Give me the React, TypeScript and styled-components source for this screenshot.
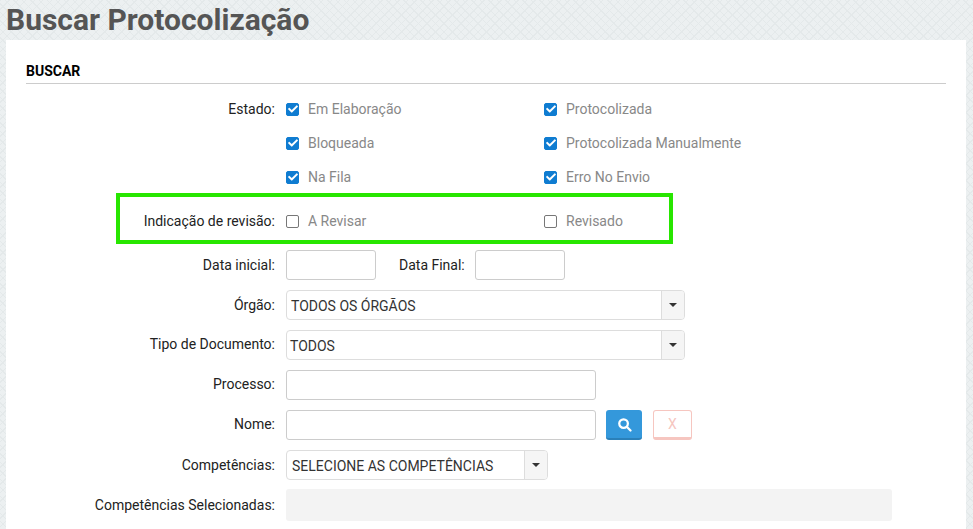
import React from "react";
import styled, { createGlobalStyle } from "styled-components";
import { FaCheck } from "react-icons/fa";

const GlobalStyle = createGlobalStyle`
    html, body {
        margin: 0;
        padding: 0;
        height: 100%;
        overflow: hidden;
    }

    body {
        font-family: Roboto, "Liberation Sans", sans-serif;
        font-size: 14px;
        color: #222;
        background-color: #ecf0f1;
        background-image:
            repeating-linear-gradient(45deg, transparent 0 5px, #e4e9ea 5px 6px),
            repeating-linear-gradient(-45deg, transparent 0 5px, #e4e9ea 5px 6px);
    }
`;

const Page = styled.div`
    height: 529px;
    overflow: hidden;
    padding: 0 7px 0 6px;
`;

const Title = styled.h1`
    margin: 0;
    height: 40px;
    font-size: 30px;
    line-height: 40px;
    font-weight: 700;
    color: #555;
`;

const Panel = styled.div`
    background: #fff;
    padding: 20px 20px 0;
    height: 489px;
    box-sizing: border-box;
`;

const SectionTitle = styled.h2`
    margin: 0 0 8px;
    padding-bottom: 4px;
    height: 19px;
    line-height: 22px;
    font-size: 14px;
    font-weight: 700;
    color: #000;
    border-bottom: 1px solid #ccc;
    box-sizing: content-box;
`;

const Row = styled.div<{ $height: number; $mb?: number }>`
    position: relative;
    display: flex;
    align-items: center;
    height: ${props => props.$height}px;
    margin-bottom: ${props => props.$mb ?? 10}px;
`;

const Label = styled.label<{ $lift?: number }>`
    flex: 0 0 250px;
    margin-right: 10px;
    margin-bottom: ${props => props.$lift ?? 0}px;
    padding-right: 1px;
    box-sizing: border-box;
    text-align: right;
    color: #222;
    white-space: nowrap;
`;

const CheckOption = styled.div`
    display: flex;
    align-items: center;
    width: 258px;
    color: #888;
`;

const Box = styled.span<{ $checked?: boolean }>`
    flex: 0 0 auto;
    display: flex;
    align-items: center;
    justify-content: center;
    width: 13px;
    height: 13px;
    box-sizing: border-box;
    margin-right: 9px;
    border-radius: 2px;
    border: 1px solid ${props => (props.$checked ? "#0f7cd1" : "#777")};
    background: ${props => (props.$checked ? "#0f7cd1" : "#fff")};
    color: #fff;

    > svg {
        flex: 0 0 auto;
        width: 10px;
        height: 10px;
    }
`;

const Highlight = styled.div`
    position: absolute;
    left: 90px;
    top: -11px;
    width: 557px;
    height: 51px;
    box-sizing: border-box;
    border: 4px solid #28e600;
    pointer-events: none;
`;

const Field = styled.div<{ $width: number }>`
    width: ${props => props.$width}px;
    height: 30px;
    box-sizing: border-box;
    border: 1px solid #ccc;
    border-radius: 3px;
    background: #fff;
`;

const InlineLabel = styled.span`
    margin: 0 10px 0 23px;
    color: #222;
`;

const Select = styled.div<{ $width: number }>`
    display: flex;
    width: ${props => props.$width}px;
    height: 30px;
    box-sizing: border-box;
    border: 1px solid #ddd;
    border-radius: 4px;
    overflow: hidden;
`;

const SelectValue = styled.div<{ $pad?: number }>`
    flex: 1;
    padding-left: ${props => props.$pad ?? 4}px;
    line-height: 30px;
    color: #333;
`;

const Caret = styled.div`
    flex: 0 0 22px;
    display: flex;
    align-items: center;
    justify-content: center;
    background: #f5f5f5;
    border-left: 1px solid #ddd;

    &::after {
        content: "";
        border-left: 4px solid transparent;
        border-right: 4px solid transparent;
        border-top: 4px solid #333;
    }
`;

const SearchButton = styled.button`
    display: flex;
    align-items: center;
    justify-content: center;
    width: 36px;
    height: 30px;
    margin-left: 10px;
    padding: 0;
    border: 0;
    border-bottom: 2px solid #2a80b9;
    border-radius: 3px;
    background: #3498db;
    color: #fff;

    > svg {
        width: 15px;
        height: 15px;
    }
`;

const ClearButton = styled.button`
    width: 39px;
    height: 30px;
    margin-left: 11px;
    padding: 0;
    border: 1px solid #f6c6c0;
    border-bottom-width: 3px;
    border-radius: 3px;
    background: #fff;
    color: #f6c6c0;
    font-family: inherit;
    font-size: 14px;
`;

const ReadOnlyArea = styled.div`
    width: 606px;
    height: 32px;
    border-radius: 3px;
    background: #f3f3f3;
`;

function Option(props: { text: string; checked?: boolean }) {
    return (
        <CheckOption>
            <Box $checked={props.checked}>{props.checked && <FaCheck />}</Box>
            {props.text}
        </CheckOption>
    );
}

function SearchIcon() {
    return (
        <svg viewBox="0 0 16 16" fill="none" stroke="currentColor" strokeWidth="2.4">
            <circle cx="7" cy="7" r="4.6" />
            <path d="M10.4 10.4 14.4 14.4" strokeLinecap="round" />
        </svg>
    );
}

export default function App() {
    return (
        <Page>
            <GlobalStyle />
            <Title>Buscar Protocolização</Title>
            <Panel>
                <SectionTitle>BUSCAR</SectionTitle>

                <Row $height={34} $mb={0}>
                    <Label>Estado:</Label>
                    <Option text="Em Elaboração" checked />
                    <Option text="Protocolizada" checked />
                </Row>
                <Row $height={34} $mb={0}>
                    <Label />
                    <Option text="Bloqueada" checked />
                    <Option text="Protocolizada Manualmente" checked />
                </Row>
                <Row $height={34} $mb={10}>
                    <Label />
                    <Option text="Na Fila" checked />
                    <Option text="Erro No Envio" checked />
                </Row>
                <Row $height={34} $mb={12}>
                    <Label>Indicação de revisão:</Label>
                    <Option text="A Revisar" />
                    <Option text="Revisado" />
                    <Highlight />
                </Row>

                <Row $height={30}>
                    <Label>Data inicial:</Label>
                    <Field $width={90} />
                    <InlineLabel>Data Final:</InlineLabel>
                    <Field $width={90} />
                </Row>
                <Row $height={30}>
                    <Label>Órgão:</Label>
                    <Select $width={399}>
                        <SelectValue>TODOS OS ÓRGÃOS</SelectValue>
                        <Caret />
                    </Select>
                </Row>
                <Row $height={30}>
                    <Label $lift={2}>Tipo de Documento:</Label>
                    <Select $width={399}>
                        <SelectValue $pad={3}>TODOS</SelectValue>
                        <Caret />
                    </Select>
                </Row>
                <Row $height={30}>
                    <Label $lift={2}>Processo:</Label>
                    <Field $width={310} />
                </Row>
                <Row $height={30}>
                    <Label $lift={2}>Nome:</Label>
                    <Field $width={310} />
                    <SearchButton><SearchIcon /></SearchButton>
                    <ClearButton>X</ClearButton>
                </Row>
                <Row $height={30} $mb={9}>
                    <Label>Competências:</Label>
                    <Select $width={262}>
                        <SelectValue $pad={5}>SELECIONE AS COMPETÊNCIAS</SelectValue>
                        <Caret />
                    </Select>
                </Row>
                <Row $height={32}>
                    <Label>Competências Selecionadas:</Label>
                    <ReadOnlyArea />
                </Row>
            </Panel>
        </Page>
    );
}
